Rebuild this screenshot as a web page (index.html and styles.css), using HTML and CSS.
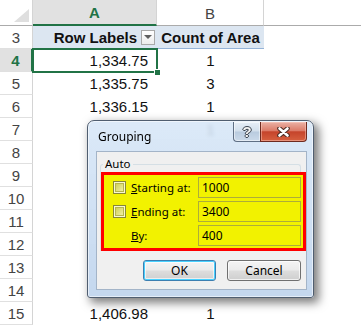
FILE: index.html
```html
<!DOCTYPE html>
<html>
<head>
<meta charset="utf-8">
<link rel="stylesheet" href="styles.css">
</head>
<body>
<div class="sheet">
  <div class="corner"></div>
  <div class="ch ch-sel">A</div>
  <div class="ch">B</div>
  <div class="ch ch-rest"></div>

  <div class="rh">3</div>
  <div class="cell pv pv-a"><span>Row Labels</span><span class="dd"></span></div>
  <div class="cell pv pv-b">Count of Area</div>
  <div class="cell"></div>

  <div class="rh rh-sel">4</div>
  <div class="cell num sel">1,334.75<span class="handle"></span></div>
  <div class="cell ctr">1</div>
  <div class="cell"></div>

  <div class="rh">5</div>
  <div class="cell num">1,335.75</div>
  <div class="cell ctr">3</div>
  <div class="cell"></div>

  <div class="rh">6</div>
  <div class="cell num">1,336.15</div>
  <div class="cell ctr">1</div>
  <div class="cell"></div>

  <div class="rh">7</div>
  <div class="cell num"></div>
  <div class="cell ctr">1</div>
  <div class="cell"></div>

  <div class="rh">8</div>
  <div class="cell num"></div>
  <div class="cell ctr"></div>
  <div class="cell"></div>

  <div class="rh">9</div>
  <div class="cell num"></div>
  <div class="cell ctr"></div>
  <div class="cell"></div>

  <div class="rh">10</div>
  <div class="cell num"></div>
  <div class="cell ctr"></div>
  <div class="cell"></div>

  <div class="rh">11</div>
  <div class="cell num"></div>
  <div class="cell ctr"></div>
  <div class="cell"></div>

  <div class="rh">12</div>
  <div class="cell num"></div>
  <div class="cell ctr"></div>
  <div class="cell"></div>

  <div class="rh">13</div>
  <div class="cell num"></div>
  <div class="cell ctr"></div>
  <div class="cell"></div>

  <div class="rh">14</div>
  <div class="cell num"></div>
  <div class="cell ctr"></div>
  <div class="cell"></div>

  <div class="rh">15</div>
  <div class="cell num">1,406.98</div>
  <div class="cell ctr">1</div>
  <div class="cell"></div>
</div>

<div class="dialog">
  <div class="titlebar">
    <span class="title">Grouping</span>
    <div class="capbtns">
      <span class="cap help">?</span>
      <span class="cap close">
        <svg width="13" height="10" viewBox="0 0 13 10">
          <path d="M2.5 1.5 L10.5 8.5 M10.5 1.5 L2.5 8.5" stroke="#4a2a22" stroke-width="4.6" stroke-linecap="round" fill="none"/>
          <path d="M2.5 1.5 L10.5 8.5 M10.5 1.5 L2.5 8.5" stroke="#ffffff" stroke-width="2.6" stroke-linecap="round" fill="none"/>
        </svg>
      </span>
    </div>
  </div>
  <div class="client">
    <fieldset class="group">
      <legend>Auto</legend>
      <div class="hl">
        <span class="cb"></span><span class="lbl"><u>S</u>tarting at:</span><span class="inp">1000</span>
        <span class="cb"></span><span class="lbl"><u>E</u>nding at:</span><span class="inp">3400</span>
        <span></span><span class="lbl"><u>B</u>y:</span><span class="inp">400</span>
      </div>
    </fieldset>
    <div class="btns">
      <span class="btn def">OK</span>
      <span class="btn">Cancel</span>
    </div>
  </div>
</div>
</body>
</html>
```

FILE: styles.css
```css
html, body {
  margin: 0;
  padding: 0;
  background: #ffffff;
}
body {
  width: 361px;
  height: 327px;
  overflow: hidden;
  position: relative;
  font-family: "Liberation Sans", Arial, sans-serif;
}

.sheet {
  display: grid;
  grid-template-columns: 33px 124px 107px 97px;
  grid-template-rows: 26px repeat(13, 23px);
  font-size: 15px;
  color: #111;
}

.corner {
  box-sizing: border-box;
  border-right: 1px solid #d4d4d4;
  border-bottom: 1px solid #ababab;
  display: flex;
  justify-content: flex-end;
  align-items: flex-end;
  padding: 0 3px 3px 0;
}
.corner::after {
  content: "";
  width: 0;
  height: 0;
  border-left: 15px solid transparent;
  border-bottom: 13px solid #dfdfdf;
}

.ch {
  box-sizing: border-box;
  border-right: 1px solid #d4d4d4;
  border-bottom: 1px solid #ababab;
  display: flex;
  align-items: center;
  justify-content: center;
  color: #444;
  font-size: 15px;
  padding-top: 1px;
}
.ch-sel {
  background: #e1e1e1;
  border-bottom: 2px solid #217346;
  color: #217346;
  font-weight: bold;
}
.ch-rest {
  border-right: none;
}

.rh {
  box-sizing: border-box;
  border-right: 1px solid #d4d4d4;
  border-bottom: 1px solid #e0e0e0;
  display: flex;
  align-items: center;
  justify-content: center;
  color: #444;
}
.rh-sel {
  background: #e1e1e1;
  color: #217346;
  font-weight: bold;
  border-right: 2px solid #217346;
}

.cell {
  display: flex;
  align-items: center;
}
.num {
  justify-content: flex-end;
  padding-right: 9px;
}
.ctr {
  justify-content: center;
}

.pv {
  background: #dce6f1;
  border-bottom: 1px solid #95b3d7;
  box-sizing: border-box;
  font-weight: bold;
}
.pv-a {
  justify-content: flex-end;
  gap: 4px;
  padding-right: 2px;
}
.pv-b {
  justify-content: center;
}
.dd {
  box-sizing: border-box;
  width: 14px;
  height: 15px;
  border: 1px solid #a9a9a9;
  background: linear-gradient(#ffffff, #ececec);
  display: flex;
  align-items: center;
  justify-content: center;
}
.dd::after {
  content: "";
  width: 0;
  height: 0;
  border-left: 4px solid transparent;
  border-right: 4px solid transparent;
  border-top: 4px solid #5f5f5f;
}

.sel {
  position: relative;
}
.sel::before {
  content: "";
  position: absolute;
  left: -1px;
  top: -1px;
  right: -1px;
  bottom: -1px;
  border: 2px solid #217346;
}
.handle {
  position: absolute;
  right: -4px;
  bottom: -4px;
  width: 5px;
  height: 5px;
  background: #217346;
  border: 1px solid #ffffff;
}

/* dialog */
.dialog {
  position: absolute;
  left: 87px;
  top: 120px;
  width: 227px;
  height: 178px;
  box-sizing: border-box;
  border: 1px solid #505e70;
  border-radius: 7px 7px 3px 3px;
  background: linear-gradient(rgba(214, 230, 247, 0.86), rgba(188, 210, 236, 0.88));
  -webkit-backdrop-filter: blur(2px);
  backdrop-filter: blur(2px);
  box-shadow: 4px 4px 10px 1px rgba(0, 0, 0, 0.5), inset 0 0 0 1px rgba(255, 255, 255, 0.55);
  padding: 0 6px 7px 8px;
  display: flex;
  flex-direction: column;
  font-family: "Noto Sans", "Open Sans", sans-serif;
  font-size: 11.5px;
  color: #000;
}
.titlebar {
  height: 30px;
  display: flex;
  align-items: flex-start;
  flex: none;
}
.title {
  padding-left: 2px;
  margin-top: 7px;
  font-size: 12px;
  line-height: 17px;
}
.capbtns {
  margin-left: auto;
  margin-top: 1px;
  display: flex;
}
.cap {
  box-sizing: border-box;
  height: 20px;
  display: flex;
  align-items: center;
  justify-content: center;
  border: 1px solid #5f6f84;
  border-top: none;
}
.help {
  width: 27px;
  border-radius: 0 0 0 4px;
  border-right: none;
  background: linear-gradient(#e6eef7 0%, #d2dfec 48%, #b9cbdf 52%, #cbdaea 100%);
  box-shadow: inset 0 0 0 1px rgba(255, 255, 255, 0.5);
  font-family: "Liberation Sans", Arial, sans-serif;
  font-weight: bold;
  font-size: 15px;
  color: #f4f4f4;
  text-shadow: 1px 0 0 #3b4450, -1px 0 0 #3b4450, 0 1px 0 #3b4450, 0 -1px 0 #3b4450;
}
.close {
  width: 47px;
  border-radius: 0 0 4px 0;
  border-color: #6e2a1f;
  background: linear-gradient(#eab1a5 0%, #dc7c69 45%, #c5442b 52%, #d6603f 100%);
  box-shadow: inset 0 0 0 1px rgba(255, 210, 200, 0.45);
}

.client {
  flex: 1;
  box-sizing: border-box;
  background: #f0f0f0;
  border: 1px solid #a3b4c8;
  display: flex;
  flex-direction: column;
}
.group {
  margin: 4px 5px 0 3px;
  padding: 0;
  border: 1px solid #d5dfe5;
  border-bottom: none;
  border-radius: 3px 3px 0 0;
  min-inline-size: 0;
}
.group legend {
  padding: 0 2px;
  margin-left: 2px;
  line-height: 16px;
  font-size: 11.5px;
}
.hl {
  margin-right: -6px;
  border: 3px solid #ff0000;
  background: #f2f200;
  display: grid;
  grid-template-columns: 13px 62px 1fr;
  grid-auto-rows: 21px;
  column-gap: 5px;
  row-gap: 3px;
  padding: 2px 2px 2px 9px;
  align-items: center;
}
.cb {
  box-sizing: border-box;
  width: 13px;
  height: 13px;
  border: 1px solid #86863a;
  background: linear-gradient(135deg, #c9c944, #f7f7b8);
  box-shadow: inset 0 0 0 1px #fafad0, inset 0 0 0 2px #b5b54e;
}
.lbl {
  white-space: nowrap;
}
.inp {
  box-sizing: border-box;
  height: 21px;
  border: 1px solid #adad3a;
  display: flex;
  align-items: center;
  padding-left: 3px;
  font-size: 12px;
}

.btns {
  margin-top: 9px;
  display: flex;
  justify-content: flex-end;
  gap: 11px;
  padding-right: 5px;
}
.btn {
  box-sizing: border-box;
  height: 21px;
  width: 74px;
  border: 1px solid #707070;
  border-radius: 3px;
  background: linear-gradient(#f4f4f4 0%, #ebebeb 48%, #dddddd 52%, #cfcfcf 100%);
  box-shadow: inset 0 0 0 1px rgba(255, 255, 255, 0.7);
  display: flex;
  align-items: center;
  justify-content: center;
  font-size: 12px;
}
.def {
  width: 73px;
  border-color: #3c7fb1;
  box-shadow: inset 0 0 0 1px #48d1ff, inset 0 0 0 2px rgba(255, 255, 255, 0.6);
}
```
